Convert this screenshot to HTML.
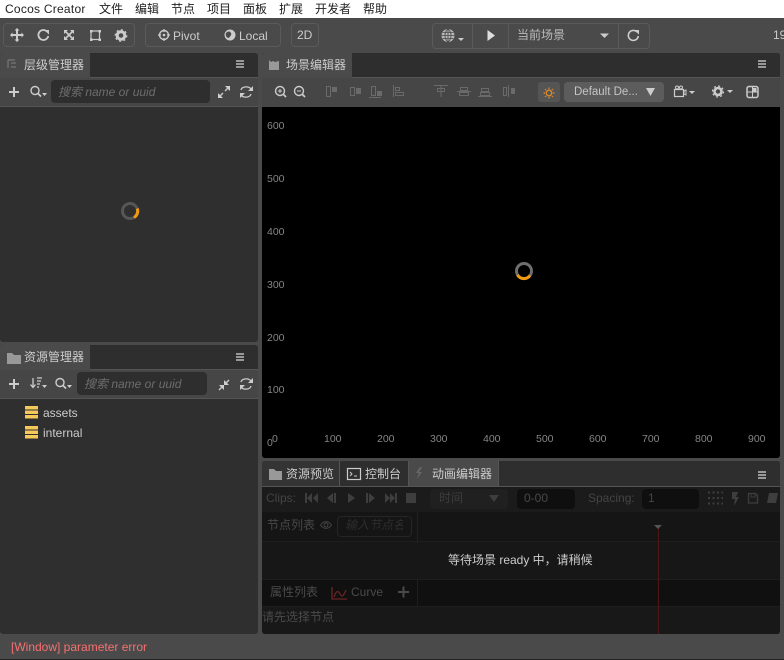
<!DOCTYPE html>
<html><head><meta charset="utf-8">
<style>
html,body{margin:0;padding:0}
body{width:784px;height:660px;overflow:hidden;position:relative;background:#4a4a4a;font-family:"Liberation Sans","Noto Sans CJK SC",sans-serif;font-size:12px;color:#ccc}
.a{position:absolute;white-space:nowrap}
.b{position:absolute;box-sizing:border-box}
svg{position:absolute;overflow:visible}
.num{position:absolute;font-size:10.5px;color:#858585;white-space:nowrap;line-height:12px}
</style></head><body>
<!-- menu -->
<div class="b" style="left:0;top:0;width:784px;height:18px;background:#fff"></div>
<div class="a" style="left:5px;top:1px;color:#222;font-size:12px;line-height:16px;letter-spacing:.25px">Cocos Creator</div>
<div class="a" style="left:99px;top:1px;color:#222;line-height:16px">文件</div>
<div class="a" style="left:135px;top:1px;color:#222;line-height:16px">编辑</div>
<div class="a" style="left:171px;top:1px;color:#222;line-height:16px">节点</div>
<div class="a" style="left:207px;top:1px;color:#222;line-height:16px">项目</div>
<div class="a" style="left:243px;top:1px;color:#222;line-height:16px">面板</div>
<div class="a" style="left:279px;top:1px;color:#222;line-height:16px">扩展</div>
<div class="a" style="left:315px;top:1px;color:#222;line-height:16px">开发者</div>
<div class="a" style="left:363px;top:1px;color:#222;line-height:16px">帮助</div>

<!-- toolbar groups -->
<div class="b" style="left:3px;top:23px;width:132px;height:24px;border:1px solid #5a5a5a;border-radius:4px"></div>
<div class="b" style="left:145px;top:23px;width:136px;height:24px;border:1px solid #5a5a5a;border-radius:4px"></div>
<div class="b" style="left:291px;top:23px;width:28px;height:24px;border:1px solid #5a5a5a;border-radius:4px"></div>
<div class="a" style="left:297px;top:27px;color:#ccc;line-height:16px">2D</div>
<svg style="left:0;top:0" width="300" height="50" fill="none" stroke="#ccc">
<path d="M17 29v12M11 35h12" stroke-width="2"/><path d="M17 28l-2.500 2.500h5zM17 42l-2.500-2.500h5zM10 35l2.500-2.500v5zM24 35l-2.500-2.500v5z" fill="#ccc" stroke="none"/>
<path d="M47 31.500a5 5 0 1 0 1.300 4.500" stroke-width="1.800"/><path d="M44 30h5v4.500z" fill="#ccc" stroke="none"/>
<path d="M65 31l8 8M73 31l-8 8" stroke-width="1.600"/><path d="M64 30h4l-4 4zM74 30v4l-4-4zM64 40v-4l4 4zM74 40h-4l4-4z" fill="#ccc" stroke="none"/>
<rect x="91" y="31" width="8.500" height="8.500" stroke-width="1.200"/><path d="M90 30h2.500v2.500H90zM98.500 30h2.500v2.500h-2.500zM90 38.500h2.500V41H90zM98.500 38.500h2.500V41h-2.500z" fill="#ccc" stroke="none"/>
<circle cx="121" cy="35.500" r="3.800" stroke-width="3"/><circle cx="121" cy="35.500" r="5.800" stroke-width="1.200" stroke-dasharray="2 2.500"/>
<circle cx="164" cy="35" r="4.500" stroke-width="1.400"/><circle cx="164" cy="35" r="1.300" fill="#ccc" stroke="none"/><path d="M164 29v3M164 38v3M158 35h3M167 35h3" stroke-width="1.200"/>
<circle cx="230" cy="35" r="5.500" fill="#ccc" stroke="none"/><path d="M226 33c2-2 4-2 5 0s-1 3-2 5c-2 0-4-2-3-5z" fill="#4a4a4a" stroke="none"/>
</svg>
<div class="a" style="left:173px;top:28px;color:#ccc;line-height:16px">Pivot</div>
<div class="a" style="left:239px;top:28px;color:#ccc;line-height:16px">Local</div>

<div class="b" style="left:432px;top:23px;width:218px;height:26px;border:1px solid #5a5a5a;border-radius:4px"></div>
<div class="b" style="left:472px;top:24px;width:1px;height:24px;background:#5a5a5a"></div>
<div class="b" style="left:508px;top:24px;width:1px;height:24px;background:#5a5a5a"></div>
<div class="b" style="left:618px;top:24px;width:1px;height:24px;background:#5a5a5a"></div>
<svg style="left:0;top:0" width="784" height="50" fill="none" stroke="#ccc">
<circle cx="448" cy="35.500" r="6.500" fill="#b5b5b5" stroke="none"/><path d="M441.500 35.500h13M442.500 32.500h11M442.500 38.500h11M448 29v13M448 29c-4 3-4 10 0 13M448 29c4 3 4 10 0 13" stroke="#4a4a4a" stroke-width=".8"/>
<path d="M458 38h6l-3 3z" fill="#ccc" stroke="none"/>
<path d="M487.500 30l7.500 5.500-7.500 5.500z" fill="#ddd" stroke="none"/>
<path d="M600 33.500h9l-4.500 4.500z" fill="#ccc" stroke="none"/>
<path d="M637 32a5 5 0 1 0 1.300 4" stroke-width="1.600"/><path d="M634 30h5v4.500z" fill="#ccc" stroke="none"/>
</svg>
<div class="a" style="left:517px;top:27px;color:#bbb;line-height:16px">当前场景</div>
<div class="a" style="left:773px;top:27px;color:#ccc;line-height:16px">19</div>

<!-- hierarchy panel -->
<div class="b" style="left:0;top:53px;width:258px;height:289px;background:#2f2f2f;border-radius:3px;overflow:hidden">
 <div class="b" style="left:0;top:0;width:258px;height:25px;background:#2e2e2e;border-bottom:1px solid #555"></div>
 <div class="b" style="left:0;top:0;width:90px;height:25px;background:#4a4a4a"></div>
 <div class="b" style="left:0;top:25px;width:258px;height:29px;background:#464646;border-bottom:1px solid #555"></div>
 <div class="b" style="left:51px;top:27px;width:159px;height:23px;background:#2e2e2e;border-radius:4px"></div>
</div>
<div class="a" style="left:24px;top:57px;color:#ccc;line-height:16px">层级管理器</div>
<div class="a" style="left:58px;top:84px;color:#6d6d6d;font-style:italic;line-height:16px">搜索 name or uuid</div>
<!-- assets panel -->
<div class="b" style="left:0;top:345px;width:258px;height:289px;background:#2f2f2f;border-radius:3px;overflow:hidden">
 <div class="b" style="left:0;top:0;width:258px;height:25px;background:#2e2e2e;border-bottom:1px solid #555"></div>
 <div class="b" style="left:0;top:0;width:90px;height:25px;background:#4a4a4a"></div>
 <div class="b" style="left:0;top:25px;width:258px;height:29px;background:#464646;border-bottom:1px solid #555"></div>
 <div class="b" style="left:77px;top:27px;width:130px;height:23px;background:#2e2e2e;border-radius:4px"></div>
</div>
<div class="a" style="left:24px;top:349px;color:#ccc;line-height:16px">资源管理器</div>
<div class="a" style="left:84px;top:376px;color:#6d6d6d;font-style:italic;line-height:16px">搜索 name or uuid</div>
<div class="a" style="left:43px;top:405px;color:#ccc;line-height:16px">assets</div>
<div class="a" style="left:43px;top:425px;color:#ccc;line-height:16px">internal</div>

<!-- scene panel -->
<div class="b" style="left:262px;top:53px;width:518px;height:405px;background:#000;border-radius:3px;overflow:hidden">
 <div class="b" style="left:0;top:0;width:518px;height:25px;background:#2e2e2e;border-bottom:1px solid #555"></div>
 <div class="b" style="left:0;top:0;width:90px;height:25px;background:#4a4a4a"></div>
 <div class="b" style="left:0;top:25px;width:518px;height:29px;background:#464646"></div>
</div>
<div class="a" style="left:286px;top:57px;color:#ccc;line-height:16px">场景编辑器</div>
<div class="b" style="left:538px;top:82px;width:22px;height:20px;background:#555;border-radius:3px"></div>
<div class="b" style="left:564px;top:82px;width:100px;height:20px;background:#5c5c5c;border-radius:4px"></div>
<div class="a" style="left:574px;top:84px;color:#c4c4c4;font-size:11.500px;line-height:16px">Default De...</div>
<div class="num" style="left:267px;top:120px">600</div>
<div class="num" style="left:267px;top:173px">500</div>
<div class="num" style="left:267px;top:226px">400</div>
<div class="num" style="left:267px;top:279px">300</div>
<div class="num" style="left:267px;top:332px">200</div>
<div class="num" style="left:267px;top:384px">100</div>
<div class="num" style="left:267px;top:437px">0</div>
<div class="num" style="left:272px;top:433px">0</div>
<div class="num" style="left:324px;top:433px">100</div>
<div class="num" style="left:377px;top:433px">200</div>
<div class="num" style="left:430px;top:433px">300</div>
<div class="num" style="left:483px;top:433px">400</div>
<div class="num" style="left:536px;top:433px">500</div>
<div class="num" style="left:589px;top:433px">600</div>
<div class="num" style="left:642px;top:433px">700</div>
<div class="num" style="left:695px;top:433px">800</div>
<div class="num" style="left:748px;top:433px">900</div>

<!-- animation panel -->
<div class="b" style="left:262px;top:461px;width:518px;height:173px;background:#171717;border-radius:3px;overflow:hidden">
 <div class="b" style="left:0;top:0;width:518px;height:26px;background:#2e2e2e;border-bottom:1px solid #555"></div>
 <div class="b" style="left:0;top:0;width:78px;height:25px;background:#343434;border-right:1px solid #555"></div>
 <div class="b" style="left:79px;top:0;width:68px;height:25px;background:#2e2e2e;border-right:1px solid #555"></div>
 <div class="b" style="left:147px;top:0;width:90px;height:25px;background:#4a4a4a;border-right:1px solid #555"></div>
 <div class="b" style="left:0;top:26px;width:518px;height:25px;background:#1b1b1b"></div>
 <div class="b" style="left:0;top:51px;width:518px;height:30px;background:#151515;border-bottom:1px solid #1e1e1e"></div>
 <div class="b" style="left:0;top:118px;width:518px;height:27px;background:#101010;border-top:1px solid #1e1e1e"></div>
 <div class="b" style="left:0;top:145px;width:518px;height:28px;background:#181818;border-top:1px solid #1e1e1e"></div>
 <div class="b" style="left:155px;top:51px;width:1px;height:31px;background:#222"></div>
 <div class="b" style="left:155px;top:118px;width:1px;height:28px;background:#1e1e1e"></div>
 <div class="b" style="left:396px;top:66px;width:1px;height:107px;background:#4f1616"></div>
 <div class="b" style="left:168px;top:28px;width:78px;height:20px;background:#202020;border-radius:4px"></div>
 <div class="b" style="left:255px;top:28px;width:58px;height:20px;background:#0f0f0f;border-radius:4px"></div>
 <div class="b" style="left:380px;top:28px;width:57px;height:20px;background:#0f0f0f;border-radius:4px"></div>
 <div class="b" style="left:75px;top:55px;width:75px;height:21px;border:1px solid #262626;border-radius:4px"></div>
</div>
<div class="a" style="left:286px;top:466px;color:#ccc;line-height:16px">资源预览</div>
<div class="a" style="left:365px;top:466px;color:#ccc;line-height:16px">控制台</div>
<div class="a" style="left:432px;top:466px;color:#ccc;line-height:16px">动画编辑器</div>
<div class="a" style="left:266px;top:490px;color:#444;line-height:16px">Clips:</div>
<div class="a" style="left:439px;top:490px;color:#3c3c3c;line-height:16px">时间</div>
<div class="a" style="left:524px;top:490px;color:#484848;line-height:16px">0-00</div>
<div class="a" style="left:588px;top:490px;color:#444;line-height:16px">Spacing:</div>
<div class="a" style="left:648px;top:490px;color:#444;line-height:16px">1</div>
<div class="a" style="left:267px;top:517px;color:#484848;line-height:16px">节点列表</div>
<div class="a" style="left:345px;top:517px;color:#2e2e2e;font-style:italic;line-height:16px;width:58px;overflow:hidden">输入节点名称</div>
<div class="a" style="left:448px;top:552px;color:#ccc;line-height:16px">等待场景 ready 中，请稍候</div>
<div class="a" style="left:270px;top:584px;color:#4a4a4a;line-height:16px">属性列表</div>
<div class="a" style="left:351px;top:584px;color:#4a4a4a;line-height:16px">Curve</div>
<div class="a" style="left:262px;top:609px;color:#4a4a4a;line-height:16px">请先选择节点</div>

<!-- icons over panels -->
<svg style="left:0;top:0" width="784" height="660" fill="none" stroke="#ccc">
<!-- hierarchy tab -->
<path d="M8 60h7M8 60v8M11 63h5M11 67h5" stroke="#777" stroke-width="1.200"/>
<path d="M236 61h8M236 64h8M236 67h8" stroke="#bbb" stroke-width="1.500"/>
<path d="M9 92h10M14 87v10" stroke-width="2"/>
<circle cx="35" cy="90.500" r="4" stroke-width="1.400"/><path d="M38 93.500l3 3" stroke-width="1.700"/><path d="M42 93h5l-2.500 3z" fill="#ccc" stroke="none"/>
<path d="M219 97l4-4M225 91l4-4" stroke-width="1.400"/><path d="M218 98v-5l5 5zM230 86v5l-5-5z" fill="#cfcfcf" stroke="none"/>
<path d="M241 90c1-4 8-4 10-1M251 94c-1 4-8 4-10 1" stroke-width="1.300"/><path d="M253 86v5h-5zM240 98v-5h5z" fill="#ccc" stroke="none"/>
<!-- assets -->
<path d="M7 353h5l2 2h7v9H7z" fill="#999" stroke="none"/>
<path d="M236 354h8M236 357h8M236 360h8" stroke="#bbb" stroke-width="1.500"/>
<path d="M9 384h10M14 379v10" stroke-width="2"/>
<path d="M33 378v9M30.500 384.500l2.500 3 2.500-3" stroke-width="1.300"/><path d="M37 378h5M37 381h4M37 384h3M37 387h2" stroke-width="1.300"/><path d="M42 385h5l-2.500 3z" fill="#ccc" stroke="none"/>
<circle cx="60" cy="382.500" r="4" stroke-width="1.400"/><path d="M63 385.500l3 3" stroke-width="1.700"/><path d="M67 385h5l-2.500 3z" fill="#ccc" stroke="none"/>
<path d="M219 390l4-4M225 384l4-4" stroke-width="1.400"/><path d="M224 385v5l-5-5zM224 385h5l-5-5z" fill="#cfcfcf" stroke="none"/>
<path d="M241 382c1-4 8-4 10-1M251 386c-1 4-8 4-10 1" stroke-width="1.300"/><path d="M253 378v5h-5zM240 390v-5h5z" fill="#ccc" stroke="none"/>
<g fill="#f5c85a" stroke="none">
<rect x="25" y="406" width="13" height="3.500"/><rect x="25" y="410.500" width="13" height="3.500"/><rect x="25" y="415" width="13" height="3.500"/>
<rect x="25" y="426" width="13" height="3.500"/><rect x="25" y="430.500" width="13" height="3.500"/><rect x="25" y="435" width="13" height="3.500"/>
</g>
<!-- scene tab -->
<path d="M269 60l2 2 2-1 2 1 4-1v9h-10z" fill="#999" stroke="none"/>
<path d="M758 61h8M758 64h8M758 67h8" stroke="#bbb" stroke-width="1.500"/>
<!-- scene toolbar -->
<circle cx="280" cy="91" r="4.500" stroke-width="1.400"/><path d="M283.500 94.500l2.500 2.500" stroke-width="1.700"/><path d="M278 91h4M280 89v4" stroke-width="1"/>
<circle cx="299" cy="91" r="4.500" stroke-width="1.400"/><path d="M302.500 94.500l2.500 2.500" stroke-width="1.700"/><path d="M297 91h4" stroke-width="1"/>
<g stroke="#6a6a6a" stroke-width="1">
<rect x="326.500" y="86.500" width="4" height="10"/><rect x="350.500" y="87.500" width="4" height="8"/><rect x="371.500" y="86.500" width="4" height="9"/><path d="M369 97.500h12"/>
<path d="M393.500 85v12"/><rect x="395.500" y="87.500" width="4" height="3"/><rect x="395.500" y="92.500" width="8" height="3"/>
<path d="M434 85.500h14M441 85v12"/><rect x="437.500" y="88.500" width="7" height="3"/><path d="M457 91.500h14"/><rect x="460.500" y="87.500" width="7" height="3"/><rect x="459.500" y="92.500" width="9" height="3"/>
<path d="M478 96.500h14"/><rect x="481.500" y="88.500" width="7" height="3"/><rect x="480.500" y="92.500" width="9" height="3"/>
<path d="M508.500 85v12"/><rect x="503.500" y="87.500" width="3" height="8"/>
</g>
<g fill="#6a6a6a" stroke="none"><rect x="332" y="87" width="5" height="5"/><rect x="356" y="88" width="5" height="6"/><rect x="377" y="91" width="5" height="5"/><rect x="511" y="88" width="4" height="6"/></g>
<circle cx="549" cy="93" r="2.800" stroke="#e08a2a" stroke-width="1.300"/><path d="M549 87.500v1.500M549 97v1.500M543.500 93h1.500M553 93h1.500M545 89l1 1M552 96l1 1M545 97l1-1M552 90l1-1" stroke="#e08a2a" stroke-width="1.200"/>
<path d="M646 88h9l-4.500 8z" fill="#ccc" stroke="none"/>
<rect x="674.500" y="89.500" width="9" height="7" stroke-width="1.200"/><circle cx="677" cy="87.500" r="1.500" stroke-width="1"/><circle cx="681" cy="87.500" r="1.500" stroke-width="1"/><path d="M684 91l2-1v5l-2-1z" stroke-width="1"/><path d="M689 91h6l-3 3z" fill="#ccc" stroke="none"/>
<circle cx="718" cy="91.500" r="3.500" stroke-width="2.600"/><circle cx="718" cy="91.500" r="5.500" stroke-width="1.200" stroke-dasharray="2 2.300"/><path d="M727 90h6l-3 3z" fill="#ccc" stroke="none"/>
<rect x="747" y="86.500" width="11" height="11" rx="2" stroke-width="1.500"/><path d="M752.500 87v10M747 92h11" stroke-width="1"/><rect x="753" y="88" width="3.500" height="3.500" fill="#ccc" stroke="none"/>
<!-- spinners -->
<circle cx="130" cy="211" r="7.500" stroke="#565656" stroke-width="3"/>
<path d="M137.300 208.500a7.500 7.500 0 0 1-3.300 9" stroke="#f09a10" stroke-width="3"/>
<circle cx="524" cy="271" r="7.500" stroke="#6e6e6e" stroke-width="3"/>
<path d="M517.500 275a7.500 7.500 0 0 0 12.500.5" stroke="#f09a10" stroke-width="3"/>
<!-- bottom tabs -->
<path d="M269 469h5l2 2h6v9h-13z" fill="#999" stroke="none"/>
<rect x="347.500" y="468.500" width="13" height="11" stroke-width="1.200"/><path d="M350 472l2 2-2 2M354 476h3" stroke-width="1"/>
<path d="M420 467l-4 6h3l-2 6 5-7h-3l3-5z" fill="#666" stroke="none"/>
<path d="M758 472h8M758 475h8M758 478h8" stroke="#bbb" stroke-width="1.500"/>
<!-- anim toolbar -->
<g fill="#3e3e3e" stroke="none">
<path d="M305 493h2v10h-2zM312 493v10l-5-5zM318 493v10l-5-5z"/><path d="M333 493v10l-6-5zM334 493h2v10h-2z"/><path d="M348 493l7 5-7 5z"/>
<path d="M366 493h2v10h-2zM369 493l6 5-6 5z"/><path d="M385 493l5 5-5 5zM390 493l5 5-5 5zM395 493h2v10h-2z"/><rect x="406" y="493" width="10" height="10"/>
<path d="M489 495h10l-5 7z"/>
<path d="M732 492h6l-2 5h3l-5 9 1-7h-3z"/>
</g>
<path d="M708 492.500h15M708 498h15M708 503.500h15" stroke="#3e3e3e" stroke-width="2" stroke-dasharray="2 2.500"/>
<path d="M748.500 493.500h7l2 2v7.500h-9z" stroke="#3e3e3e" stroke-width="1.300"/><path d="M751 494v3h4v-3" stroke="#3e3e3e"/>
<path d="M769 493h9l-2 10h-9z" fill="#3e3e3e" stroke="none"/>
<circle cx="326" cy="525" r="2" stroke="#444" stroke-width="1"/><path d="M320.500 525c3-4.500 8-4.500 11 0-3 4.500-8 4.500-11 0z" stroke="#444" stroke-width="1"/>
<path d="M654 525h8l-4 4z" fill="#555" stroke="none"/>
<path d="M332 587v12h15M334 597c2-6 4-7 6-3s4 1 6-4" stroke="#6b2323" stroke-width="1.300"/>
<path d="M398 592h11M403.500 586.500v11" stroke="#4a4a4a" stroke-width="2"/>
</svg>

<!-- footer -->
<div class="a" style="left:11px;top:639px;color:#f87070;line-height:16px">[Window] parameter error</div>
<div class="b" style="left:0;top:659px;width:784px;height:1px;background:#222"></div>
</body></html>
